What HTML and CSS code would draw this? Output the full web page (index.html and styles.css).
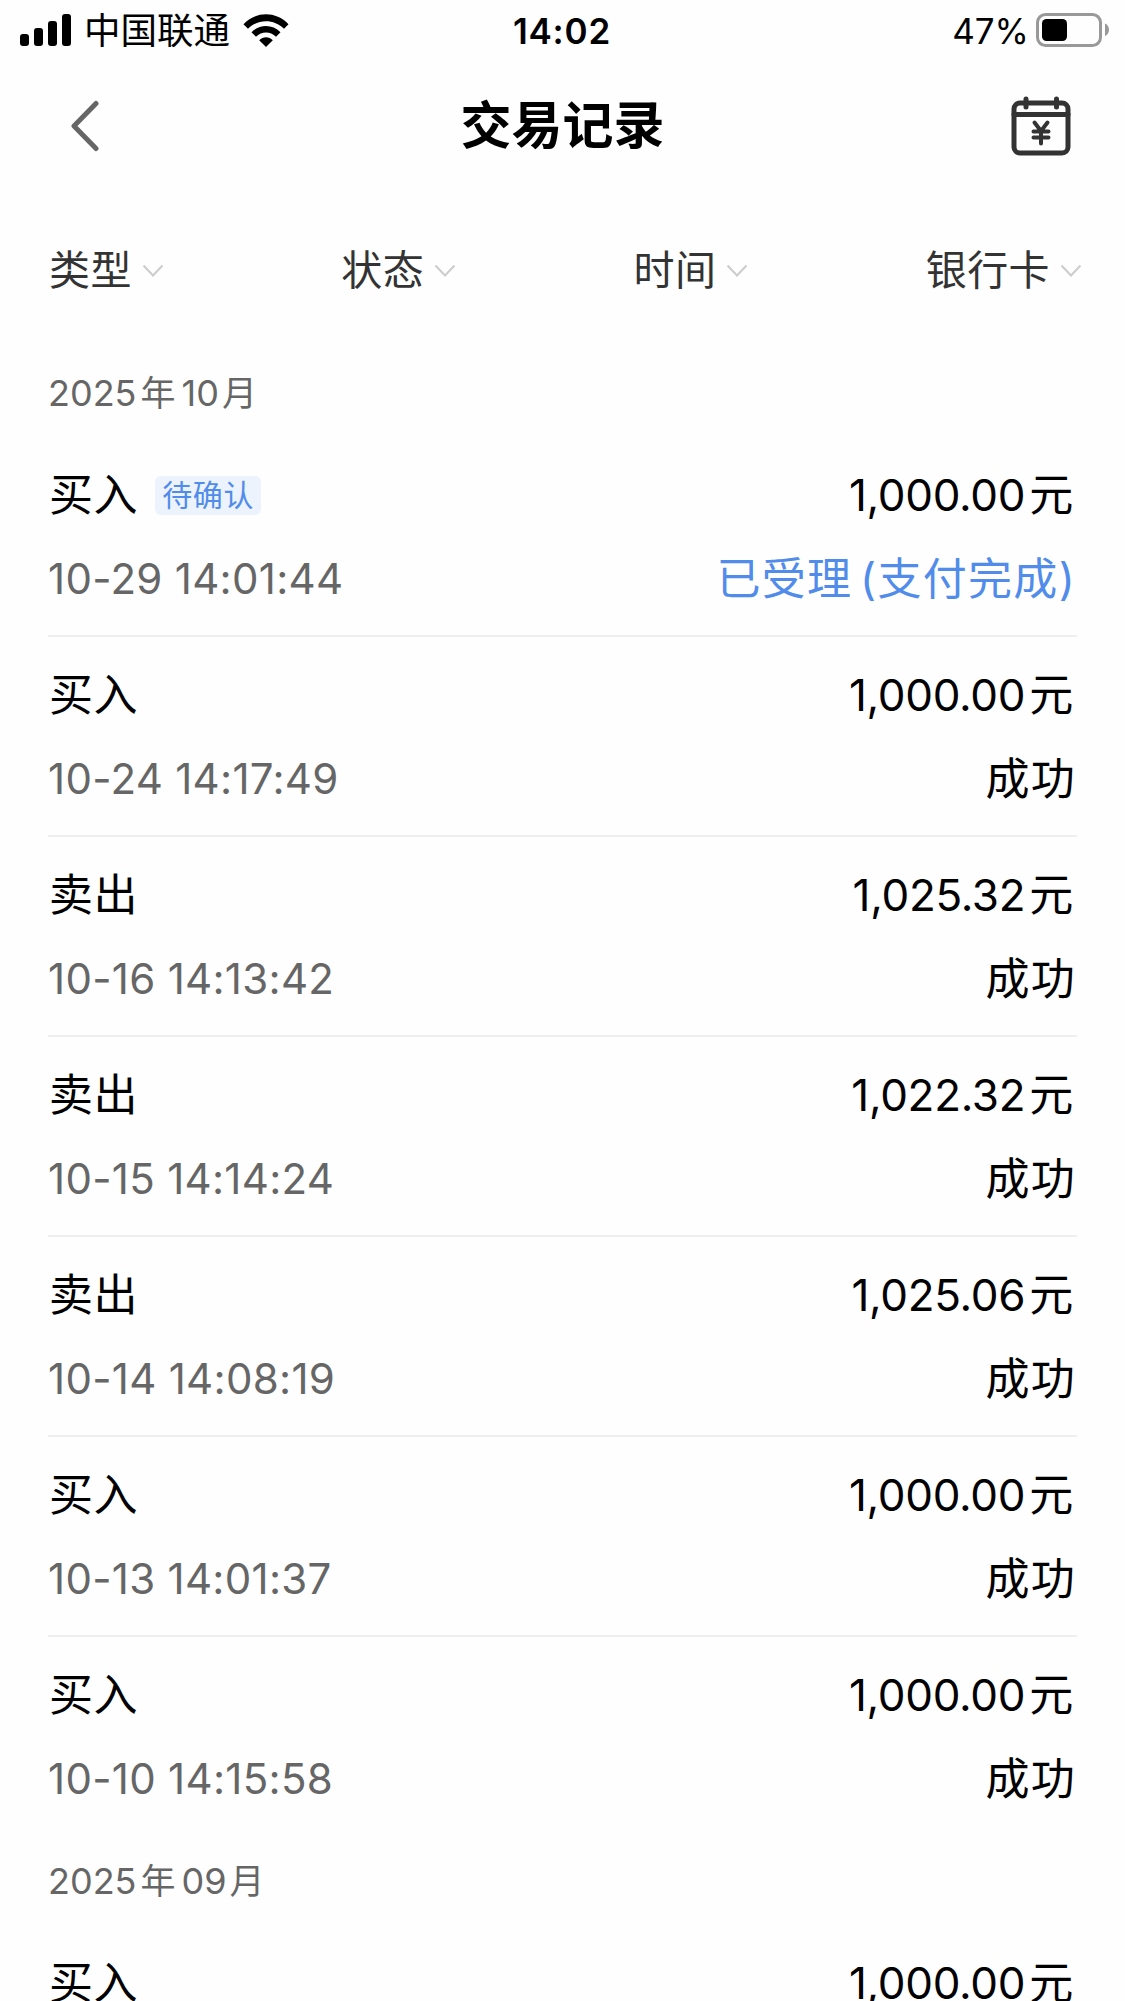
FILE: index.html
```
<!DOCTYPE html>
<html lang="zh-CN">
<head>
  <meta charset="UTF-8">
  <title>交易记录</title>
  <link rel="stylesheet" href="styles.css">
</head>
<body>
<div class="status-bar">
  <div class="carrier">
    <svg class="signal" width="52" height="32" viewBox="0 0 52 32">
      <rect x="0" y="20" width="9" height="12" rx="3"/>
      <rect x="14" y="14" width="9" height="18" rx="3"/>
      <rect x="28" y="7" width="9" height="25" rx="3"/>
      <rect x="42" y="0" width="9" height="32" rx="3"/>
    </svg>
    <span class="carrier-name">中国联通</span>
    <svg class="wifi" width="46" height="33" viewBox="0 0 46 33">
      <path d="M0.5 10.2C13 -3 33 -3 45.500 10.200L41 14.700C31 4.700 15 4.700 5 14.700Z"/>
      <path d="M8.500 18.300C16.500 10 29.500 10 37.500 18.300L33 22.800C27.500 17 18.500 17 13 22.800Z"/>
      <path d="M16.200 26.200C20 22.300 26 22.300 29.800 26.200L23 33Z"/>
    </svg>
  </div>
  <div class="clock">14:02</div>
  <div class="battery">
    <span>47%</span>
    <svg width="74" height="34" viewBox="0 0 74 34">
      <rect x="1.500" y="1.500" width="63" height="31" rx="8" fill="none" stroke="#999" stroke-width="3"/>
      <rect x="6" y="6" width="25" height="22" rx="4.500"/>
      <path d="M69 10.500C74.300 12.500 74.300 21 69 23Z" fill="#999"/>
    </svg>
  </div>
</div>

<header class="header">
  <a class="back" href="javascript:void(0)">
    <svg width="28" height="52" viewBox="0 0 28 52">
      <path d="M25 3.500L3 26L25 48.500" fill="none" stroke="#666" stroke-width="5" stroke-linecap="round" stroke-linejoin="round"/>
    </svg>
  </a>
  <h1>交易记录</h1>
  <a class="calendar" href="javascript:void(0)">
    <svg width="60" height="60" viewBox="0 0 60 60" fill="none" stroke="#333" stroke-width="5" stroke-linecap="round" stroke-linejoin="round">
      <rect x="3" y="7" width="54" height="50" rx="6"/>
      <path d="M3 18.500H57M15 3V11M45.500 3V11"/>
      <path d="M23.500 26.500L30 35L36.500 26.500M30 35V47.500M22.500 35.500H37.500M22.500 41.500H37.500" stroke-width="4"/>
    </svg>
  </a>
</header>

<nav class="filters">
  <a class="filter">类型<svg class="arrow" width="22" height="14" viewBox="0 0 22 14"><path d="M1.500 1.500L11 11.500L20.500 1.500"/></svg></a>
  <a class="filter">状态<svg class="arrow" width="22" height="14" viewBox="0 0 22 14"><path d="M1.500 1.500L11 11.500L20.500 1.500"/></svg></a>
  <a class="filter">时间<svg class="arrow" width="22" height="14" viewBox="0 0 22 14"><path d="M1.500 1.500L11 11.500L20.500 1.500"/></svg></a>
  <a class="filter">银行卡<svg class="arrow" width="22" height="14" viewBox="0 0 22 14"><path d="M1.500 1.500L11 11.500L20.500 1.500"/></svg></a>
</nav>

<main class="records">
  <h2 class="month">2025<span>年</span>10<span>月</span></h2>
  <ul class="list">
    <li class="record">
      <div class="line"><span class="type">买入<em class="tag">待确认</em></span><span class="amount">1,000.00<i>元</i></span></div>
      <div class="line"><span class="date">10-29 14:01:44</span><span class="state pending">已受理 (支付完成)</span></div>
    </li>
    <li class="record">
      <div class="line"><span class="type">买入</span><span class="amount">1,000.00<i>元</i></span></div>
      <div class="line"><span class="date">10-24 14:17:49</span><span class="state">成功</span></div>
    </li>
    <li class="record">
      <div class="line"><span class="type">卖出</span><span class="amount">1,025.32<i>元</i></span></div>
      <div class="line"><span class="date">10-16 14:13:42</span><span class="state">成功</span></div>
    </li>
    <li class="record">
      <div class="line"><span class="type">卖出</span><span class="amount">1,022.32<i>元</i></span></div>
      <div class="line"><span class="date">10-15 14:14:24</span><span class="state">成功</span></div>
    </li>
    <li class="record">
      <div class="line"><span class="type">卖出</span><span class="amount">1,025.06<i>元</i></span></div>
      <div class="line"><span class="date">10-14 14:08:19</span><span class="state">成功</span></div>
    </li>
    <li class="record">
      <div class="line"><span class="type">买入</span><span class="amount">1,000.00<i>元</i></span></div>
      <div class="line"><span class="date">10-13 14:01:37</span><span class="state">成功</span></div>
    </li>
    <li class="record">
      <div class="line"><span class="type">买入</span><span class="amount">1,000.00<i>元</i></span></div>
      <div class="line"><span class="date">10-10 14:15:58</span><span class="state">成功</span></div>
    </li>
  </ul>
  <h2 class="month">2025<span>年</span>09<span>月</span></h2>
  <ul class="list">
    <li class="record">
      <div class="line"><span class="type">买入</span><span class="amount">1,000.00<i>元</i></span></div>
    </li>
  </ul>
</main>
</body>
</html>
```

FILE: styles.css
```
*{
  box-sizing: border-box;
}
body{
  margin: 0;
  height: 2001px;
  overflow: hidden;
  background: #fefefe;
  color: #000;
  font-family: Inter, "Noto Sans CJK SC", sans-serif;
}
svg{
  display: block;
  flex: none;
}
a{
  color: inherit;
  text-decoration: none;
}

.status-bar{
  display: grid;
  grid-template-columns: 1fr auto 1fr;
  align-items: center;
  height: 60px;
  padding: 0 15px 0 20px;
  font-size: 35px;
}
.carrier{
  display: flex;
  align-items: center;
}
.carrier-name{
  margin: 0 13px 0 12px;
  padding-top: 3px;
  font-size: 36.5px;
  line-height: 57px;
}
.clock{
  font-weight: 600;
  letter-spacing: .8px;
  padding-top: 2px;
  margin-right: 6px;
}
.battery{
  display: flex;
  align-items: center;
  justify-content: flex-end;
  gap: 7px;
}
.battery span{
  padding-top: 2px;
}

.header{
  display: flex;
  align-items: center;
  justify-content: space-between;
  height: 130px;
  padding: 1px 54px 0 71px;
}
.header h1{
  margin: 0 0 0 15px;
  font-size: 51px;
  line-height: 130px;
  font-weight: 700;
}

.filters{
  display: flex;
  justify-content: space-between;
  height: 159px;
  padding: 1px 43px 0 49px;
  color: #333;
}
.filter{
  display: flex;
  align-items: center;
  height: 159px;
  font-size: 41px;
  letter-spacing: .4px;
  line-height: 159px;
}
.arrow{
  margin-left: 10px;
  fill: none;
  stroke: #ccc;
  stroke-width: 2;
}

.records{
  padding: 0 48px;
}
.month{
  margin: 0;
  height: 88px;
  line-height: 88px;
  font-size: 36px;
  font-weight: 400;
  color: #666;
}
.month span{
  margin: 0 6px 0 4px;
  font-size: 35px;
}
.month span:last-child{
  margin-left: 3px;
}
.list{
  margin: 0;
  padding: 0;
  list-style: none;
}
.record{
  height: 200px;
  padding-top: 16px;
  border-bottom: 2px solid #eee;
}
.record:last-child{
  border-bottom: 0;
}
.line{
  display: flex;
  justify-content: space-between;
  height: 84px;
  line-height: 84px;
  font-size: 44px;
}
.type{
  display: flex;
  align-items: center;
  padding-left: 1px;
  letter-spacing: .6px;
}
.tag{
  height: 39px;
  margin-left: 17px;
  padding: 0 7px;
  border-radius: 6px;
  background: #ecf3fd;
  color: #518ceb;
  font-size: 30px;
  line-height: 38px;
  font-style: normal;
}
.amount{
  padding-right: 4px;
  letter-spacing: -.3px;
}
.amount i{
  margin-left: 4px;
  font-style: normal;
}
.date{
  font-size: 42px;
  letter-spacing: .3px;
  color: #666;
}
.state{
  padding-right: 1px;
  letter-spacing: 1.3px;
}
.pending{
  color: #518ceb;
  word-spacing: -6px;
}
```
